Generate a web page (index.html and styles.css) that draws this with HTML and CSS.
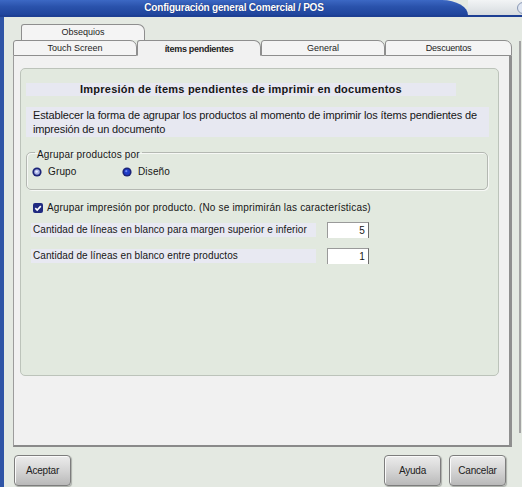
FILE: index.html
```html
<!DOCTYPE html>
<html lang="es">
<head>
    <meta charset="UTF-8">
    <title>Configuración general Comercial / POS</title>
    <link rel="stylesheet" href="styles.css">
</head>
<body>
    <div class="titlebar">
        <div class="title">Configuración general Comercial / POS</div>
        <div class="title-end"><span class="sys-btn"></span></div>
    </div>
    <div class="frame">
        <div class="work">
            <div class="tabbox">
                <div class="tabrow tabrow-back">
                    <div class="tab">Obsequios</div>
                </div>
                <div class="tabrow">
                    <div class="tab">Touch Screen</div>
                    <div class="tab tab-active">ítems pendientes</div>
                    <div class="tab">General</div>
                    <div class="tab tab-last">Descuentos</div>
                </div>
                <div class="panel">
                    <div class="group">
                        <div class="heading">Impresión de ítems pendientes de imprimir en documentos</div>
                        <div class="note">Establecer la forma de agrupar los productos al momento de imprimir los ítems pendientes de<br>impresión de un documento</div>

                        <fieldset class="options">
                            <legend>Agrupar productos por</legend>
                            <div class="radios">
                                <label class="radio">
                                    <svg width="10" height="10" viewBox="0 0 10 10"><circle cx="5" cy="5" r="4.6" fill="#1c2478"/><circle cx="5" cy="5" r="2.8" fill="#a9b3e6"/><circle cx="4.6" cy="4.6" r="1.2" fill="#eef0ff"/></svg>
                                    Grupo
                                </label>
                                <label class="radio">
                                    <svg width="10" height="10" viewBox="0 0 10 10"><circle cx="5" cy="5" r="4.6" fill="#1c2478"/><circle cx="5" cy="5" r="3" fill="#1f3cc8"/><circle cx="4.3" cy="4.2" r="1.1" fill="#6f86ee"/></svg>
                                    Diseño
                                </label>
                            </div>
                        </fieldset>

                        <label class="check">
                            <svg width="10" height="10" viewBox="0 0 10 10"><rect x="0" y="0" width="10" height="10" rx="2" fill="#1f2a80"/><path d="M2.3 5.1 L4.2 7 L7.8 3.1" fill="none" stroke="#fff" stroke-width="1.6"/></svg>
                            Agrupar impresión por producto. (No se imprimirán las características)
                        </label>

                        <div class="field">
                            <span class="field-label">Cantidad de líneas en blanco para margen superior e inferior</span>
                            <span class="field-input">5</span>
                        </div>
                        <div class="field field-second">
                            <span class="field-label">Cantidad de líneas en blanco entre productos</span>
                            <span class="field-input">1</span>
                        </div>
                    </div>
                </div>
            </div>
            <div class="side"></div>
        </div>
        <div class="buttons">
            <button class="btn">Aceptar</button>
            <span class="spacer"></span>
            <button class="btn">Ayuda</button>
            <button class="btn">Cancelar</button>
        </div>
    </div>
</body>
</html>
```

FILE: styles.css
```css
body {
    margin: 0;
    width: 522px;
    height: 487px;
    overflow: hidden;
    background-color: #e4e9e2;
    font-family: 'Liberation Sans', Arial, sans-serif;
    font-size: 11px;
    color: #161616;
}

/* Title bar */
.titlebar {
    display: flex;
    height: 15px;
    border-bottom: 2px solid #1d3f93;
}

.title {
    flex: 1;
    background: linear-gradient(#3c68c4, #2a52ab 45%, #1f449c);
    border-top-right-radius: 26px 15px;
    color: #fff;
    font-weight: 700;
    font-size: 10px;
    letter-spacing: -0.2px;
    line-height: 15px;
    text-align: center;
    text-shadow: 0 0 1px #0c2260;
}

.title-end {
    width: 54px;
    background: linear-gradient(#f2f4f5, #d6dbdf);
    display: flex;
    justify-content: flex-end;
    align-items: center;
}

.sys-btn {
    flex: none;
    width: 10px;
    height: 10px;
    margin-right: -7px;
    border-radius: 50%;
    border: 1px solid #8a98b4;
    background: #dfe6f2;
}

/* Window frame */
.frame {
    height: 470px;
    border-left: 4px solid #2f55a6;
    display: flex;
    flex-direction: column;
}

.work {
    display: flex;
    margin-top: 7px;
}

.tabbox {
    margin-left: 9px;
    width: 499px;
}

.tabrow {
    display: flex;
    height: 16px;
}

.tabrow-back {
    padding-left: 8px;
}

.tab {
    box-sizing: border-box;
    width: 124px;
    height: 16px;
    border: 1px solid #8e8e8e;
    border-radius: 3px 7px 0 0;
    background-color: #f4f4f4;
    font-size: 9px;
    line-height: 15px;
    text-align: center;
    color: #1c1c1c;
}

.tabrow-back .tab {
    border-bottom: none;
}

.tab-active {
    font-weight: 700;
    letter-spacing: -0.3px;
    line-height: 17px;
    background-color: #f1f1f1;
    border-bottom-color: #f1f1f1;
}

.tab-last {
    flex: 1;
    letter-spacing: -0.2px;
}

.panel {
    box-sizing: border-box;
    height: 391px;
    padding: 12px 0 0 6px;
    background-color: #f1f1f1;
    border-left: 1px solid #9c9c9c;
    border-right: 3px solid #8f8f8f;
    border-bottom: 2px solid #8a8a8a;
}

.side {
    width: 7px;
    height: 392px;
    margin-top: 17px;
    border-right: 2px solid #a4a4a4;
}

/* Green content box */
.group {
    box-sizing: border-box;
    width: 479px;
    height: 308px;
    border: 1px solid #bcc3ba;
    border-radius: 5px;
    background-color: #e2e9df;
    display: flex;
    flex-direction: column;
    align-items: flex-start;
}

.heading {
    width: 430px;
    margin: 14px 0 0 5px;
    height: 13px;
    line-height: 13px;
    background-color: #e7e8f1;
    font-weight: 700;
    letter-spacing: 0.24px;
    text-align: center;
}

.note {
    box-sizing: border-box;
    width: 463px;
    margin: 11px 0 0 5px;
    padding: 1px 7px;
    line-height: 14px;
    background-color: #e7e8f1;
    white-space: nowrap;
    letter-spacing: -0.14px;
}

.options {
    box-sizing: border-box;
    width: 462px;
    margin: 6px 0 0 5px;
    padding: 4px 5px 11px;
    border: 1px solid #b4b8b2;
    border-radius: 5px;
    box-shadow: inset 1px 1px 0 #f6f8f5, 1px 1px 0 #f6f8f5;
    font-size: 10px;
    letter-spacing: 0.15px;
}

.options legend {
    padding: 6px 2px 0;
    margin-left: 3px;
    line-height: 12px;
}

.radios {
    display: flex;
    height: 13px;
    align-items: center;
}

.radio {
    display: flex;
    align-items: center;
    gap: 6px;
    width: 90px;
}

.check {
    display: flex;
    align-items: center;
    gap: 4px;
    height: 13px;
    margin: 11px 0 0 12px;
    font-size: 10px;
    letter-spacing: 0.18px;
    white-space: nowrap;
}

.field {
    display: flex;
    align-items: center;
    margin: 8px 0 0 10px;
    font-size: 10px;
    letter-spacing: 0.07px;
}

.field-second {
    margin-top: 10px;
}

.field-label {
    width: 283px;
    height: 14px;
    line-height: 14px;
    padding-left: 2px;
    background-color: #e8e9f2;
    white-space: nowrap;
}

.field-input {
    box-sizing: border-box;
    width: 42px;
    height: 16px;
    margin-left: 11px;
    padding-right: 3px;
    line-height: 15px;
    text-align: right;
    background-color: #fff;
    border-top: 1px solid #9a9a9a;
    border-left: 1px solid #9a9a9a;
    border-right: 1px solid #6c6c6c;
}

/* Bottom buttons */
.buttons {
    display: flex;
    margin-top: 8px;
    padding: 0 16px 0 10px;
    gap: 8px;
}

.spacer {
    flex: 1;
}

.btn {
    width: 57px;
    height: 31px;
    padding: 0;
    border: 1px solid #7d7d7d;
    border-radius: 4px;
    background: linear-gradient(#ececec, #d2d2d2 55%, #b9b9b9);
    box-shadow: inset 1px 1px 0 #fafafa, 1px 1px 1px rgba(0, 0, 0, 0.25);
    font-family: 'Liberation Sans', Arial, sans-serif;
    font-size: 10px;
    letter-spacing: -0.2px;
    color: #202020;
}
```
